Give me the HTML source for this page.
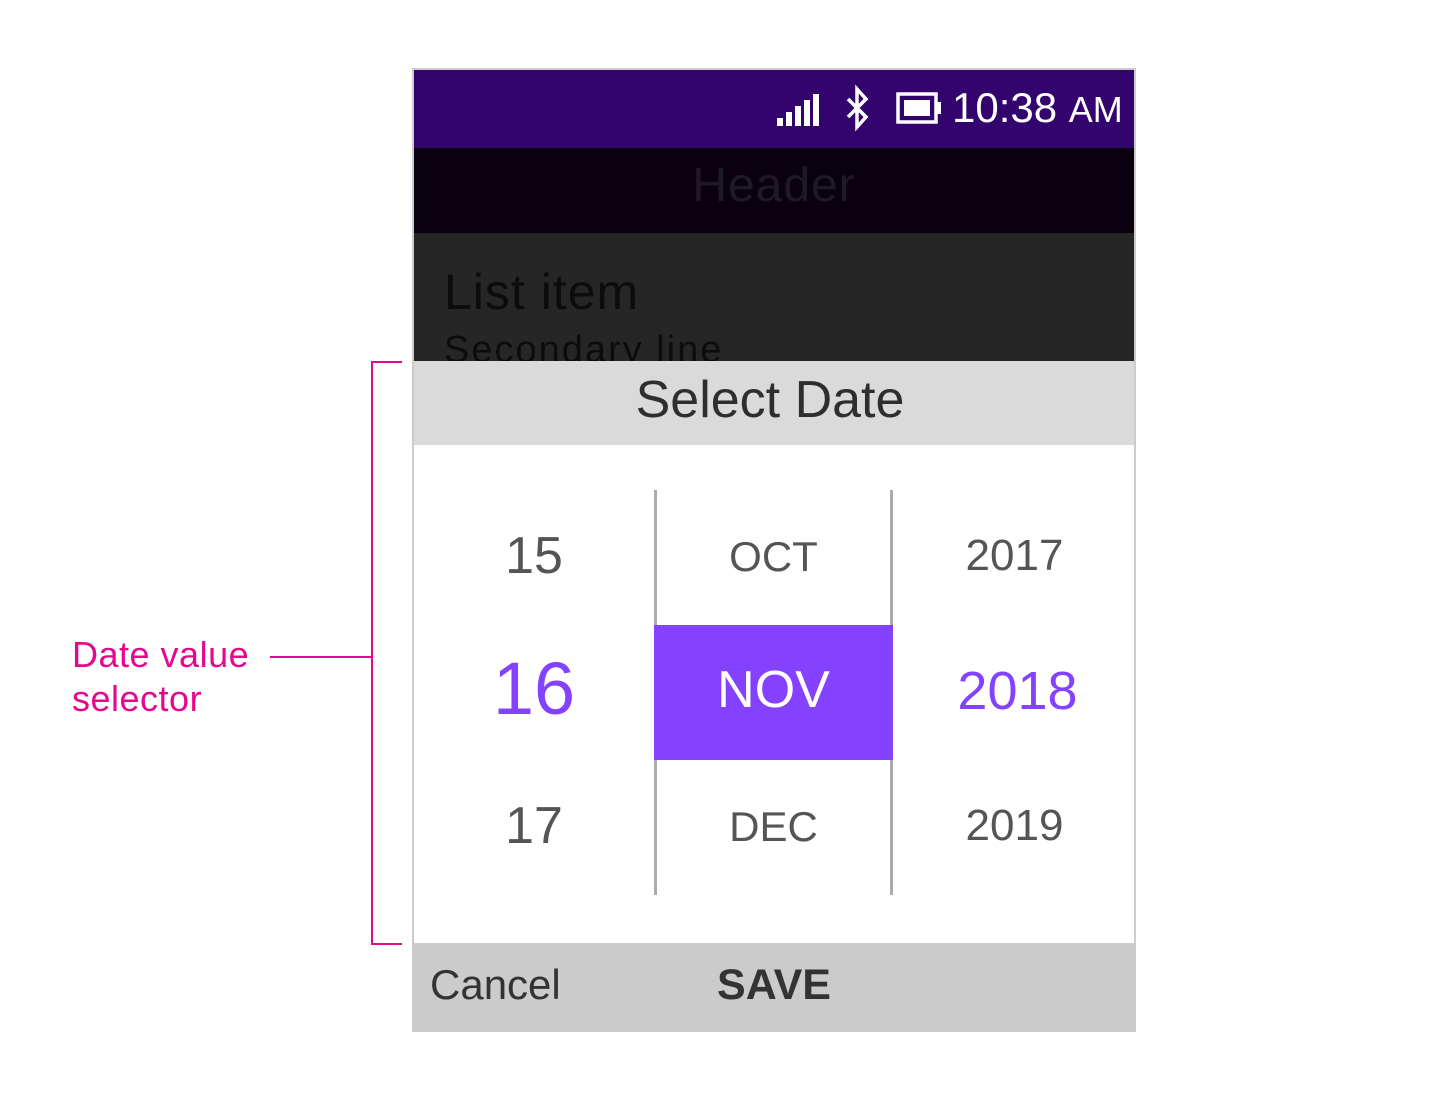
<!DOCTYPE html>
<html><head><style>
body{margin:0;width:1436px;height:1100px;background:#fff;position:relative;font-family:"Liberation Sans",sans-serif;overflow:hidden}
.a{position:absolute}
.t{position:absolute;white-space:nowrap}
</style></head><body>
<div class="a" style="left:412px;top:68px;width:724px;height:964px;background:#ccc"></div>
<div class="a" style="left:414px;top:70px;width:720px;height:78px;background:#33046d"></div>
<div class="a" style="left:414px;top:148px;width:720px;height:85px;background:#0a0010"></div>
<div class="a" style="left:414px;top:233px;width:720px;height:128px;background:#262626;overflow:hidden">
 <div class="t" style="left:30px;top:30px;font-size:50px;letter-spacing:1px;color:#0c0c0c">List item</div>
 <div class="t" style="left:30px;top:96px;font-size:38px;letter-spacing:2px;color:#0c0c0c">Secondary line</div>
</div>
<div class="t" style="left:414px;width:720px;top:158px;text-align:center;font-size:48px;letter-spacing:1px;color:#1e1a24">Header</div>
<svg class="a" style="left:776px;top:92px" width="46" height="36"><g fill="#fff"><rect x="1" y="26" width="6" height="8"/><rect x="10" y="20" width="6" height="14"/><rect x="19" y="14" width="6" height="20"/><rect x="28" y="8" width="6" height="26"/><rect x="37" y="2" width="6" height="32"/></g></svg>
<svg class="a" style="left:840px;top:84px" width="34" height="50"><path d="M8 15 L26 33 L17 43 L17 5 L26 15 L8 33" fill="none" stroke="#fff" stroke-width="3.5"/></svg>
<svg class="a" style="left:896px;top:92px" width="48" height="34"><rect x="2" y="2" width="38" height="28" fill="none" stroke="#fff" stroke-width="3.5"/><rect x="8" y="8" width="26" height="16" fill="#fff"/><rect x="40" y="10" width="5" height="12" fill="#fff"/></svg>
<div class="t" style="left:952px;top:84px;font-size:42px;color:#fff">10:38 <span style="font-size:36px">AM</span></div>
<div class="a" style="left:414px;top:361px;width:720px;height:84px;background:#dadada"></div>
<div class="t" style="left:410px;width:720px;top:370px;text-align:center;font-size:52px;color:#2e2e2e">Select Date</div>
<div class="a" style="left:414px;top:445px;width:720px;height:498px;background:#fff"></div>
<div class="a" style="left:654px;top:490px;width:3px;height:405px;background:#aaa"></div>
<div class="a" style="left:890px;top:490px;width:3px;height:405px;background:#aaa"></div>
<div class="a" style="left:654px;top:625px;width:239px;height:135px;background:#8441ff"></div>
<div class="t" style="left:414px;width:240px;top:526px;text-align:center;font-size:52px;color:#555">15</div>
<div class="t" style="left:414px;width:240px;top:646px;text-align:center;font-size:74px;color:#8441ff">16</div>
<div class="t" style="left:414px;width:240px;top:796px;text-align:center;font-size:52px;color:#555">17</div>
<div class="t" style="left:654px;width:239px;top:533px;text-align:center;font-size:42px;color:#555">OCT</div>
<div class="t" style="left:654px;width:239px;top:660px;text-align:center;font-size:52px;color:#fff">NOV</div>
<div class="t" style="left:654px;width:239px;top:803px;text-align:center;font-size:42px;color:#555">DEC</div>
<div class="t" style="left:893px;width:243px;top:531px;text-align:center;font-size:44px;color:#555">2017</div>
<div class="t" style="left:896px;width:243px;top:660px;text-align:center;font-size:54px;color:#8441ff">2018</div>
<div class="t" style="left:893px;width:243px;top:801px;text-align:center;font-size:44px;color:#555">2019</div>
<div class="a" style="left:412px;top:943px;width:724px;height:88px;background:#cbcbcb"></div>
<div class="t" style="left:430px;top:961px;font-size:42px;color:#333">Cancel</div>
<div class="t" style="left:414px;width:720px;top:961px;text-align:center;font-size:43px;font-weight:bold;color:#333">SAVE</div>
<div class="a" style="left:371px;top:361px;width:2px;height:584px;background:#e6088c"></div>
<div class="a" style="left:371px;top:361px;width:31px;height:2px;background:#e6088c"></div>
<div class="a" style="left:371px;top:943px;width:31px;height:2px;background:#e6088c"></div>
<div class="a" style="left:270px;top:656px;width:102px;height:2px;background:#e6088c"></div>
<div class="t" style="left:72px;top:633px;font-size:36px;line-height:44px;letter-spacing:0.5px;color:#e6088c">Date value<br>selector</div>
</body></html>
